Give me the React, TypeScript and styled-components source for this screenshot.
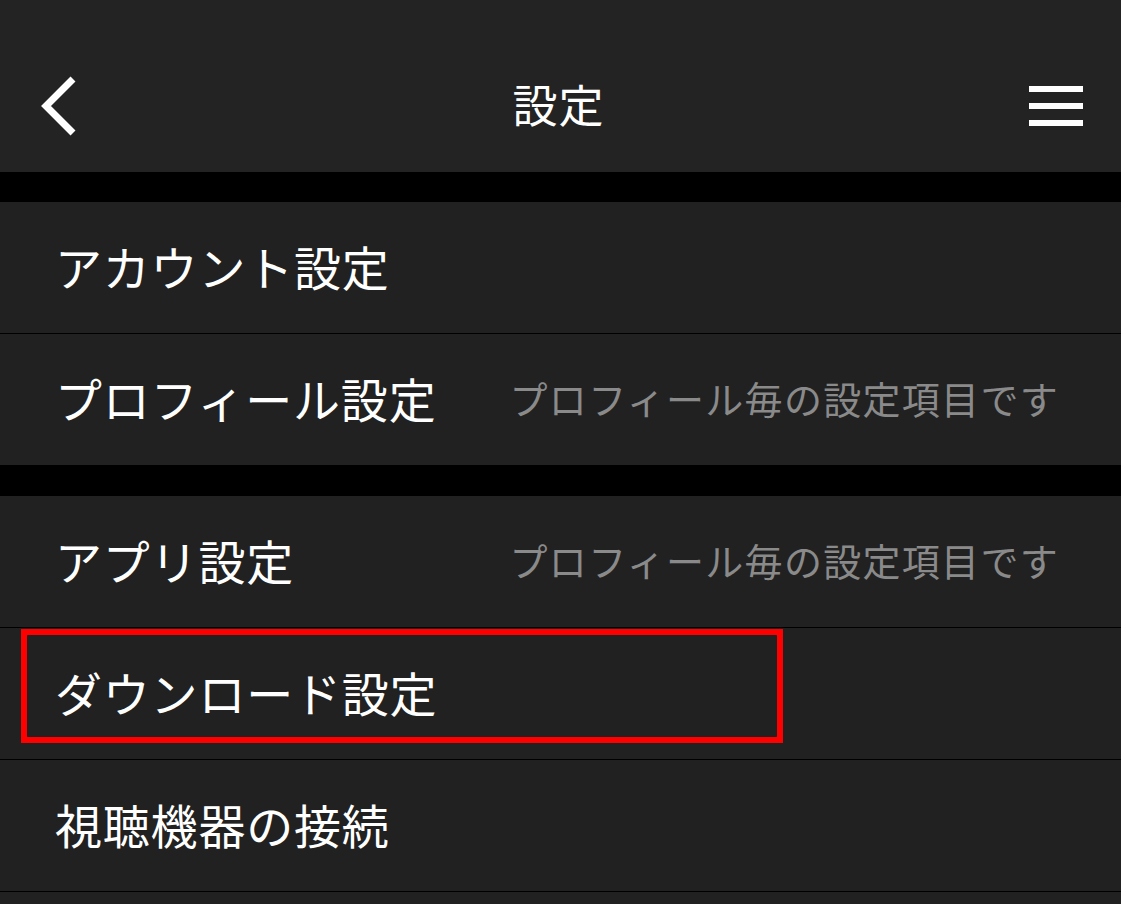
import React from "react";
import styled, { createGlobalStyle } from "styled-components";

const GlobalStyle = createGlobalStyle`
    html, body {
        margin: 0;
        padding: 0;
        background-color: #000;
    }
    body {
        font-family: "Noto Sans CJK JP", "Noto Sans", sans-serif;
    }
`;

type Row = {
    label: string;
    note?: string;
    marked?: boolean;
};

const groups: Row[][] = [
    [
        { label: "アカウント設定" },
        { label: "プロフィール設定", note: "プロフィール毎の設定項目です" },
    ],
    [
        { label: "アプリ設定", note: "プロフィール毎の設定項目です" },
        { label: "ダウンロード設定", marked: true },
        { label: "視聴機器の接続" },
    ],
];

const App: React.FC = () => {
    return (
        <Screen>
            <GlobalStyle />
            <Header>
                <IconButton aria-label="戻る">
                    <svg width="40" height="64" viewBox="0 0 40 64">
                        <polyline
                            points="33,5 6,32 33,59"
                            fill="none"
                            stroke="#fff"
                            strokeWidth="7"
                            strokeLinejoin="miter"
                        />
                    </svg>
                </IconButton>
                <Title>設定</Title>
                <Menu aria-label="メニュー">
                    <span />
                    <span />
                    <span />
                </Menu>
            </Header>
            {groups.map((group, gi) => (
                <Group key={gi}>
                    {group.map((row) => (
                        <Item key={row.label}>
                            <Label>{row.label}</Label>
                            {row.note && <Note>{row.note}</Note>}
                            {row.marked && <Highlight />}
                        </Item>
                    ))}
                </Group>
            ))}
            <Rest />
        </Screen>
    );
};

export default App;

const Screen = styled.div`
    width: 100%;
    min-height: 904px;
    background-color: #000;
    display: flex;
    flex-direction: column;
`;

const Header = styled.header`
    height: 172px;
    background-color: #232323;
    display: grid;
    grid-template-columns: 1fr auto 1fr;
    align-items: center;
    padding: 40px 38px 0 40px;
    box-sizing: border-box;
`;

const IconButton = styled.button`
    justify-self: start;
    background: none;
    border: none;
    padding: 0;
    margin-top: 0;
    display: flex;
`;

const Title = styled.h1`
    margin: -6px 0 0 -6px;
    color: #fff;
    font-size: 45px;
    font-weight: 400;
    letter-spacing: 1px;
`;

const Menu = styled.button`
    justify-self: end;
    background: none;
    border: none;
    padding: 0;
    width: 54px;
    display: flex;
    flex-direction: column;
    gap: 11px;
    margin-top: 0;
    > span {
        display: block;
        height: 6px;
        background-color: #fff;
    }
`;

const Group = styled.section`
    margin-top: 30px;
    display: flex;
    flex-direction: column;
    gap: 1px;
    padding-bottom: 1px;
`;

const Item = styled.div`
    position: relative;
    height: 131px;
    background-color: #212121;
    display: flex;
    align-items: center;
    justify-content: space-between;
    padding: 0 62px 4px 55px;
    box-sizing: border-box;
`;

const Label = styled.span`
    color: #fff;
    font-size: 47px;
    font-weight: 400;
    letter-spacing: 0.8px;
`;

const Note = styled.span`
    color: #8a8a8a;
    font-size: 38px;
    letter-spacing: 1.3px;
`;

const Highlight = styled.div`
    position: absolute;
    left: 21px;
    top: 1px;
    width: 762px;
    height: 114px;
    border: 6px solid #ff0000;
    box-sizing: border-box;
    pointer-events: none;
`;

const Rest = styled.div`
    flex: 1;
    background-color: #212121;
`;
